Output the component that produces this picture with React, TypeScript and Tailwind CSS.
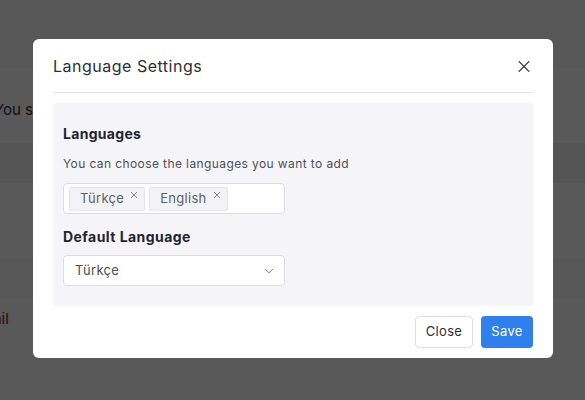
import React from "react";

function XIcon({ className, sw = 1.2 }: { className?: string; sw?: number }) {
  return (
    <svg viewBox="0 0 10 10" className={className} fill="none" stroke="currentColor" strokeWidth={sw} strokeLinecap="round">
      <path d="M1.5 1.5 L8.5 8.5 M8.5 1.5 L1.5 8.5" />
    </svg>
  );
}

function Tag({ label }: { label: string }) {
  return (
    <div className="flex h-[24px] items-start rounded-[2px] border border-[#e4e4ea] bg-[#f3f3f6] pl-[10px] pr-[6px]">
      <span className="self-center text-[13px] tracking-[0.3px] text-[#5b5f6a]">{label}</span>
      <XIcon sw={1} className="ml-[6px] mt-[3px] h-[8px] w-[8px] text-[#6b6f7a]" />
    </div>
  );
}

export default function App() {
  return (
    <div
      className="relative h-[400px] w-[585px] overflow-hidden bg-white"
      style={{ fontFamily: "Inter, 'Noto Sans', 'Liberation Sans', sans-serif" }}
    >
      {/* background page */}
      <div className="flex flex-col">
        <div className="h-[68px] bg-[#f8f8f8]" />
        <div className="flex h-[75px] items-center pt-[10px]">
          <span className="-ml-[6px] text-[15px] text-[#333]">You should select the settings</span>
        </div>
        <div className="h-[40px] bg-[#f2f2f7]" />
        <div className="h-[75px]" />
        <div className="h-[40px] bg-[#f8f8f8]" />
        <div className="flex h-[42px] items-center">
          <span className="-ml-[29px] text-[15px] text-[#8b1a1a]">Email</span>
        </div>
      </div>

      {/* overlay */}
      <div className="absolute inset-0 bg-black/65" />

      {/* modal */}
      <div className="absolute left-[33px] top-[39px] flex w-[520px] flex-col rounded-[6px] bg-white px-[20px] pb-[10px]">
        <div className="flex h-[54px] items-center justify-between border-b border-[#e6e6ea]">
          <span className="text-[16px] tracking-[0.5px] text-[#2b2f38]">Language Settings</span>
          <XIcon sw={0.9} className="mr-[2px] mt-[2px] h-[15px] w-[14px] text-[#2b2f38]" />
        </div>

        <div className="mt-[10px] flex flex-col rounded-[4px] bg-[#f5f5f8] px-[10px] pb-[20px] pt-[20px]">
          <div className="text-[14px] font-bold tracking-[0.3px] text-[#1f2430]">Languages</div>
          <div className="mt-[11px] text-[12px] tracking-[0.4px] text-[#4b4f5a]">You can choose the languages you want to add</div>
          <div className="mt-[10px] flex h-[31px] w-[222px] items-center gap-[4px] rounded-[4px] border border-[#dcdce6] bg-white px-[5px]">
            <Tag label="Türkçe" />
            <Tag label="English" />
          </div>
          <div className="mt-[12px] text-[14px] font-bold tracking-[0.45px] text-[#1f2430]">Default Language</div>
          <div className="mt-[8px] flex h-[31px] w-[222px] items-center justify-between rounded-[4px] border border-[#dcdce6] bg-white pl-[11px] pr-[10px]">
            <span className="text-[13px] tracking-[0.3px] text-[#4b4f5a]">Türkçe</span>
            <svg viewBox="0 0 12 8" className="h-[6px] w-[10px] text-[#6b6f7a]" fill="none" stroke="currentColor" strokeWidth="1.3">
              <path d="M1 1.5 L6 6.5 L11 1.5" />
            </svg>
          </div>
        </div>

        <div className="mt-[10px] flex justify-end gap-[8px]">
          <button className="h-[32px] w-[58px] rounded-[4px] border border-[#dcdce6] bg-white text-[13px] tracking-[0.3px] text-[#2b2f38]">Close</button>
          <button className="h-[32px] w-[52px] rounded-[4px] bg-[#2f80ed] text-[13px] tracking-[0.3px] text-white">Save</button>
        </div>
      </div>
    </div>
  );
}
